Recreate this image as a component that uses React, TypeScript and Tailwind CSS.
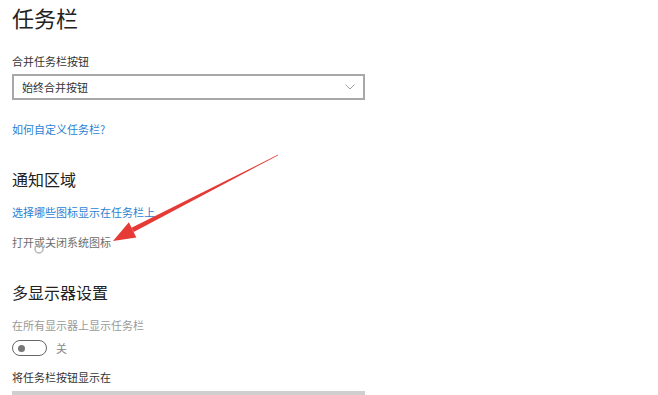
import React from 'react';

const font = { fontFamily: '"Noto Sans CJK SC", "Noto Sans", sans-serif' };

const Chevron = () => (
  <svg width="10" height="6" viewBox="0 0 10 6" className="text-gray-400">
    <path d="M0.5 0.5 L5 5 L9.5 0.5" fill="none" stroke="currentColor" strokeWidth="1" />
  </svg>
);

const Arrow = () => (
  <svg className="absolute left-0 top-0 pointer-events-none" width="658" height="395" viewBox="0 0 658 395">
    <polygon
      points="278.2,154.6 277.8,155.4 133.7,232.1 131.5,227.7"
      fill="#e53a35"
    />
    <polygon points="113,241 136.3,237.5 128.9,222.3" fill="#e53a35" />
    <circle cx="39" cy="249" r="4" fill="none" stroke="#b5b5b5" strokeWidth="1.5" />
  </svg>
);

const App = () => {
  return (
    <div className="relative w-[658px] h-[395px] overflow-hidden bg-white" style={font}>
      <div className="flex flex-col pl-[12px] pt-[3px]">
        <h1 className="text-[22px] leading-[28px] text-[#222] font-normal">任务栏</h1>

        <p className="mt-[22px] text-[11px] leading-[16px] text-[#333]">合并任务栏按钮</p>
        <div className="mt-[5px] w-[353px] h-[26px] border-2 border-[#a8a8a8] flex items-center justify-between pl-[8px] pr-[8px]">
          <span className="text-[11px] text-[#333]">始终合并按钮</span>
          <Chevron />
        </div>

        <p className="mt-[21px] text-[11px] leading-[16px] text-[#2b7fd3]">如何自定义任务栏?</p>

        <h2 className="mt-[30px] text-[16px] leading-[24px] text-[#222] font-normal">通知区域</h2>
        <p className="mt-[13px] text-[11px] leading-[16px] text-[#2b7fd3]">选择哪些图标显示在任务栏上</p>
        <p className="mt-[14px] text-[11px] leading-[16px] text-[#6e6e6e]">打开或关闭系统图标</p>

        <h2 className="mt-[30px] text-[16px] leading-[24px] text-[#222] font-normal">多显示器设置</h2>
        <p className="mt-[13px] text-[11px] leading-[16px] text-[#9a9a9a]">在所有显示器上显示任务栏</p>
        <div className="mt-[7px] flex items-center gap-[9px]">
          <div className="w-[35px] h-[16px] rounded-full border-[1.5px] border-[#666] flex items-center pl-[5px]">
            <div className="w-[7px] h-[7px] rounded-full bg-[#777]" />
          </div>
          <span className="text-[11px] leading-[16px] text-[#888]">关</span>
        </div>

        <p className="mt-[13px] text-[11px] leading-[16px] text-[#333]">将任务栏按钮显示在</p>
        <div className="mt-[6px] w-[353px] h-[12px] bg-[#cfcfcf]" />
      </div>
      <Arrow />
    </div>
  );
};

export default App;
